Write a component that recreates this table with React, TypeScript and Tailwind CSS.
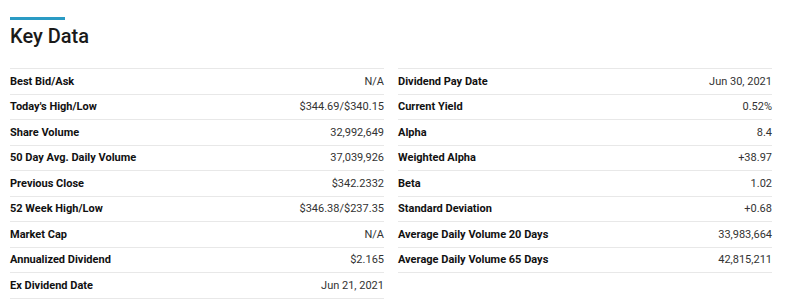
const left: [string, string][] = [
  ["Best Bid/Ask", "N/A"],
  ["Today's High/Low", "$344.69/$340.15"],
  ["Share Volume", "32,992,649"],
  ["50 Day Avg. Daily Volume", "37,039,926"],
  ["Previous Close", "$342.2332"],
  ["52 Week High/Low", "$346.38/$237.35"],
  ["Market Cap", "N/A"],
  ["Annualized Dividend", "$2.165"],
  ["Ex Dividend Date", "Jun 21, 2021"],
];

const right: [string, string][] = [
  ["Dividend Pay Date", "Jun 30, 2021"],
  ["Current Yield", "0.52%"],
  ["Alpha", "8.4"],
  ["Weighted Alpha", "+38.97"],
  ["Beta", "1.02"],
  ["Standard Deviation", "+0.68"],
  ["Average Daily Volume 20 Days", "33,983,664"],
  ["Average Daily Volume 65 Days", "42,815,211"],
];

function DataTable({ rows }: { rows: [string, string][] }) {
  return (
    <div className="border-b border-[#e8e8e8]">
      {rows.map(([label, value]) => (
        <div
          key={label}
          className="flex h-[25.56px] items-center justify-between border-t border-[#e8e8e8] pt-px"
        >
          <span className="font-bold text-[#111]">{label}</span>
          <span className="text-[#333]">{value}</span>
        </div>
      ))}
    </div>
  );
}

export default function App() {
  return (
    <div className="h-[307px] w-[800px] bg-white px-[10px] pt-[17px] font-['Roboto',sans-serif]">
      <div className="h-[3px] w-[55px] bg-[#2a9bc4]" />
      <h2 className="mt-[4px] text-[20px] font-medium leading-[24px] text-[#1a1a1a]">
        Key Data
      </h2>
      <div className="mt-[20px] grid w-[762px] grid-cols-2 items-start gap-x-[14px] text-[11px]">
        <DataTable rows={left} />
        <DataTable rows={right} />
      </div>
    </div>
  );
}
